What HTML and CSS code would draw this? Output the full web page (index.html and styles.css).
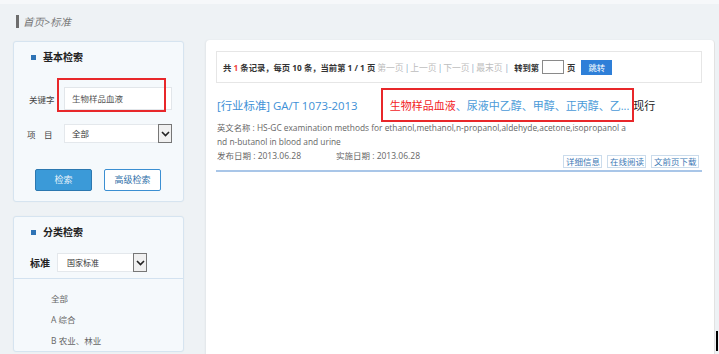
FILE: index.html
```html
<!DOCTYPE html>
<html>
<head>
    <meta charset="utf-8">
    <title>标准</title>
    <link rel="stylesheet" href="styles.css">
</head>
<body>
    <div class="crumb"><span class="crumb-bar"></span><em>首页&gt;标准</em></div>
    <div class="main">
        <div class="side">
            <div class="panel basic">
                <h2><span class="dot"></span>基本检索</h2>
                <div class="row kw">
                    <label>关键字</label>
                    <div class="input">生物样品血液</div>
                    <span class="mark mark-kw"></span>
                </div>
                <div class="row item-row">
                    <label>项　目</label>
                    <div class="select wide">全部<span class="arrow"><svg width="9" height="6" viewBox="0 0 9 6"><path d="M1 1l3.5 3.5L8 1" fill="none" stroke="#222" stroke-width="1.6"/></svg></span></div>
                </div>
                <div class="btns">
                    <a class="btn primary">检索</a>
                    <a class="btn">高级检索</a>
                </div>
            </div>
            <div class="panel cat">
                <h2><span class="dot"></span>分类检索</h2>
                <div class="row std">
                    <label>标准</label>
                    <div class="select small">国家标准<span class="arrow"><svg width="9" height="6" viewBox="0 0 9 6"><path d="M1 1l3.5 3.5L8 1" fill="none" stroke="#222" stroke-width="1.6"/></svg></span></div>
                </div>
                <ul class="cats">
                    <li>全部</li>
                    <li>A 综合</li>
                    <li>B 农业、林业</li>
                </ul>
            </div>
        </div>
        <div class="content">
            <div class="pager">
                <span>共 <span class="red">1</span> 条记录，每页 10 条，当前第 1 / 1 页</span>
                <span class="off first">第一页</span><span class="sep">|</span><span class="off">上一页</span><span class="sep">|</span><span class="off">下一页</span><span class="sep">|</span><span class="off">最末页</span><span class="sep wide-sep">|</span>
                <span class="goto">转到第</span><span class="page-box"></span><span>页</span>
                <a class="go">跳转</a>
            </div>
            <div class="result">
                <div class="result-title">
                    <a class="code">[行业标准] GA/T 1073-2013</a>
                    <a class="name"><span class="hit">生物样品血液</span>、尿液中乙醇、甲醇、正丙醇、乙...</a>
                    <span class="state">现行</span>
                    <span class="mark mark-name"></span>
                </div>
                <p class="en">英文名称 : HS-GC examination methods for ethanol,methanol,n-propanol,aldehyde,acetone,isopropanol and n-butanol in blood and urine</p>
                <div class="foot">
                    <p class="dates"><span>发布日期 : 2013.06.28</span><span>实施日期 : 2013.06.28</span></p>
                    <div class="ops">
                        <a>详细信息</a>
                        <a>在线阅读</a>
                        <a>文前页下载</a>
                    </div>
                </div>
            </div>
        </div>
    </div>
    <div class="caret"></div>
</body>
</html>
```

FILE: styles.css
```css
body {
    margin: 0;
    background: #eef2f5;
    font-family: "Open Sans", "Noto Sans CJK SC", sans-serif;
    color: #333;
    border-top: 4px solid #f6f8fa;
}
a {
    text-decoration: none;
    cursor: pointer;
}
.crumb {
    display: flex;
    align-items: center;
    height: 35px;
    padding-left: 16px;
    font-size: 10.5px;
    color: #777;
}
.crumb-bar {
    width: 3px;
    height: 13px;
    background: #6d6d6d;
    margin-right: 4px;
}
.main {
    display: flex;
    gap: 22px;
    padding-left: 13px;
    padding-top: 1px;
}
.side {
    width: 171px;
    padding-top: 1px;
}
.panel {
    position: relative;
    background: #f5f9fc;
    border: 1px solid #d6e4f0;
    border-radius: 3px;
    padding-top: 8px;
    box-shadow: 0 0 2px rgba(0,0,0,0.04);
}
.panel h2 {
    display: flex;
    align-items: center;
    margin: 0 0 0 17px;
    font-size: 10px;
    line-height: 14px;
    color: #222;
}
.dot {
    width: 5px;
    height: 5px;
    background: #2e73b5;
    margin-right: 7px;
}
.row {
    display: flex;
    align-items: center;
    position: relative;
    font-size: 8.5px;
    color: #444;
}
.row label {
    width: 35px;
    flex: none;
}
.kw {
    margin: 23px 0 0 15px;
}
.input {
    width: 99px;
    height: 21px;
    line-height: 21px;
    padding-left: 7px;
    background: #fff;
    border: 1px solid #e2e6ea;
    color: #555;
}
.item-row {
    margin: 14px 0 0 13px;
}
.item-row label {
    width: 37px;
}
.select {
    position: relative;
    height: 17px;
    line-height: 17px;
    background: #fff;
    border: 1px solid #e4e8ec;
    padding-left: 7px;
    color: #333;
    box-sizing: content-box;
}
.select.wide {
    width: 99px;
}
.select.small {
    width: 79px;
    padding-left: 9px;
    font-size: 8px;
}
.arrow {
    position: absolute;
    right: -1px;
    top: -1px;
    width: 12px;
    height: 17px;
    border: 1px solid #777;
    background: #f0f0f0;
    display: flex;
    align-items: center;
    justify-content: center;
}
.btns {
    display: flex;
    gap: 12px;
    margin: 26px 0 0 21px;
    padding-bottom: 10px;
}
.btn {
    width: 55px;
    height: 20px;
    line-height: 20px;
    text-align: center;
    font-size: 9px;
    color: #2f6fa8;
    background: #fff;
    border: 1px solid #3b8fd2;
    border-radius: 2px;
}
.btn.primary {
    background: #3b9ad8;
    border-color: #2c78b0;
    color: #eaf4fb;
}
.cat {
    margin-top: 14px;
    height: 126px;
}
.std {
    margin: 14px 0 0 16px;
}
.std label {
    width: 27px;
    font-size: 10px;
    font-weight: bold;
    color: #222;
}
.cats {
    list-style: none;
    margin: 6px 0 0;
    padding: 9px 0 0 37px;
    border-top: 1px solid #d3e2f0;
    font-size: 8.5px;
    color: #666;
}
.cats li {
    line-height: 21px;
}
.content {
    width: 486px;
    height: 314px;
    background: #fff;
    border-radius: 4px;
    padding: 11px 12px 0 10px;
    border-right: 1px solid #e2e2e2;
    box-shadow: -1px 0 2px rgba(0,0,0,0.05);
}
.pager {
    display: flex;
    align-items: center;
    height: 30px;
    border: 1px solid #e6e6e6;
    padding-left: 6px;
    font-size: 8.3px;
    font-weight: bold;
    color: #333;
    white-space: pre;
}
.red {
    color: #f0433b;
}
.off {
    color: #bdbdbd;
    font-weight: normal;
    font-size: 8.8px;
}
.off.first {
    margin-left: 2px;
}
.sep {
    color: #7f9cc0;
    font-weight: normal;
    margin: 0 1px;
}
.wide-sep {
    margin: 0 5px 0 2px;
}
.page-box {
    width: 20px;
    height: 12px;
    border: 1px solid #8a8a8a;
    margin: 0 3px 0 3px;
}
.go {
    width: 31px;
    height: 15px;
    line-height: 15px;
    margin-left: 6px;
    text-align: center;
    background: #2e7fd8;
    color: #fff;
    font-weight: normal;
}
.result {
    padding-left: 1px;
    border-bottom: 2px solid #a9c6e8;
}
.result-title {
    position: relative;
    display: flex;
    align-items: center;
    margin-top: 12px;
    height: 20px;
    font-size: 11.4px;
}
.code {
    color: #3d8fd6;
}
.name {
    margin-left: 32px;
    color: #4a9ad8;
    font-size: 11px;
}
.hit {
    color: #f2241f;
}
.state {
    margin-left: 4px;
    color: #222;
    font-size: 11px;
}
.mark {
    position: absolute;
    border: 2px solid #e8272a;
    pointer-events: none;
}
.mark-kw {
    left: 28px;
    top: -9px;
    width: 105px;
    height: 30px;
}
.mark-name {
    left: 164px;
    top: -7px;
    width: 249px;
    height: 30px;
}
.en {
    margin: 6px 0 0;
    width: 414px;
    font-size: 8.35px;
    line-height: 14px;
    color: #666;
    word-break: break-all;
}
.foot {
    display: flex;
    justify-content: space-between;
    height: 19px;
    margin-bottom: 2px;
}
.dates {
    margin: 0;
    font-size: 8.5px;
    line-height: 14px;
    color: #666;
}
.dates span + span {
    margin-left: 35px;
}
.ops {
    align-self: flex-end;
    display: flex;
    gap: 5px;
    margin-right: 3px;
}
.ops a {
    height: 11px;
    line-height: 11px;
    padding: 0 1.5px;
    border: 1px solid #cbdcec;
    font-size: 8.5px;
    color: #3b78b5;
}
.caret {
    position: absolute;
    left: 716px;
    top: 331px;
    width: 2px;
    height: 20px;
    background: #000;
}
```
